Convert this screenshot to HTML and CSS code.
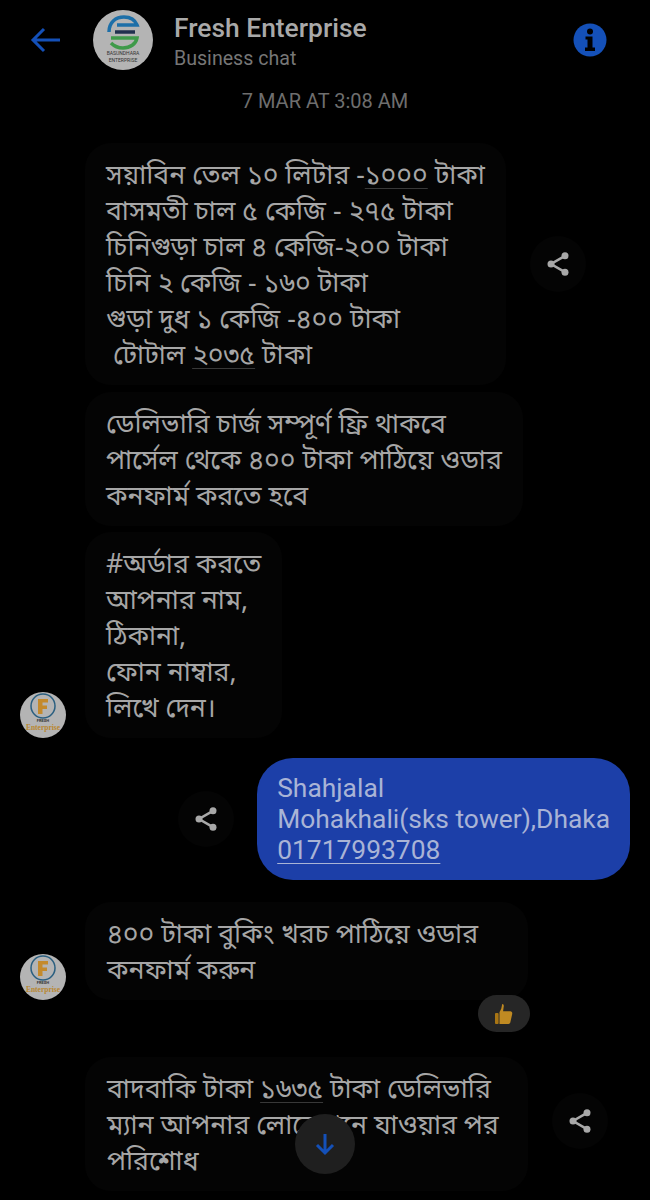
FILE: index.html
```html
<!DOCTYPE html>
<html lang="en">
<head>
    <meta charset="UTF-8">
    <meta name="viewport" content="width=device-width, initial-scale=1.0">
    <title>Fresh Enterprise</title>
    <link rel="stylesheet" href="styles.css">
</head>
<body>

<div class="screen">

    <div class="top-bar">
        <svg class="back-icon" width="34" height="28" viewBox="0 0 34 28">
            <path d="M31 14H4M15 3L4 14l11 11" fill="none" stroke="#1450b8" stroke-width="3"/>
        </svg>
        <svg class="page-logo" width="60" height="60" viewBox="0 0 60 60">
            <circle cx="30" cy="30" r="30" fill="#b4b4b4"/>
            <path d="M16 22C16 12 23 7 31 7c6 0 11 3 13 8H24" fill="none" stroke="#1d6fa8" stroke-width="3.500"/>
            <path d="M22 22h20" stroke="#20304e" stroke-width="3.500"/>
            <path d="M18 28h26c-1 6-7 10-14 10-5 0-9-2-12-5" fill="none" stroke="#3f9a4a" stroke-width="3.500"/>
            <text x="30" y="45" class="logo-text">BASUNDHARA</text>
            <text x="30" y="52" class="logo-text">ENTERPRISE</text>
        </svg>
        <div class="page-info">
            <div class="page-name">Fresh Enterprise</div>
            <div class="page-sub">Business chat</div>
        </div>
        <svg class="info-icon" width="34" height="34" viewBox="0 0 34 34">
            <circle cx="17" cy="17" r="16.5" fill="#1450b8"/>
            <circle cx="17" cy="8.500" r="3" fill="#000"/>
            <path d="M12.500 13.500h7v11h2.500v3.500h-10v-3.500h2.500v-8h-2z" fill="#000"/>
        </svg>
    </div>

    <div class="time-label">7 MAR AT 3:08 AM</div>

    <div class="row row-first">
        <div class="bubble">সয়াবিন তেল ১০ লিটার -<span class="link">১০০০</span> টাকা<br>বাসমতী চাল ৫ কেজি - ২৭৫ টাকা<br>চিনিগুড়া চাল ৪ কেজি-২০০ টাকা<br>চিনি ২ কেজি - ১৬০ টাকা<br>গুড়া দুধ ১ কেজি -৪০০ টাকা<br>&nbsp;টোটাল <span class="link">২০৩৫</span> টাকা</div>
        <div class="share share-after">
            <svg width="28" height="28" viewBox="0 0 24 24"><use href="#share"/></svg>
        </div>
    </div>

    <div class="row row-second">
        <div class="bubble">ডেলিভারি চার্জ সম্পূর্ণ ফ্রি থাকবে<br>পার্সেল থেকে ৪০০ টাকা পাঠিয়ে ওডার<br>কনফার্ম করতে হবে</div>
    </div>

    <div class="row row-third row-end">
        <svg class="avatar" width="46" height="46" viewBox="0 0 46 46"><use href="#f-logo"/></svg>
        <div class="bubble">#অর্ডার করতে<br>আপনার নাম,<br>ঠিকানা,<br>ফোন নাম্বার,<br>লিখে দেন।</div>
    </div>

    <div class="row row-out">
        <div class="share">
            <svg width="28" height="28" viewBox="0 0 24 24"><use href="#share"/></svg>
        </div>
        <div class="bubble bubble-out">Shahjalal<br>Mohakhali(sks tower),Dhaka<br><span class="link">01717993708</span></div>
    </div>

    <div class="row row-end row-react">
        <svg class="avatar" width="46" height="46" viewBox="0 0 46 46"><use href="#f-logo"/></svg>
        <div class="bubble wide-bubble">৪০০ টাকা বুকিং খরচ পাঠিয়ে ওডার<br>কনফার্ম করুন</div>
    </div>
    <div class="reaction">
        <svg width="18" height="22" viewBox="0 0 20 24">
            <path d="M8 1c2 0 2 2 1.500 4L9 9h8c2 0 2.500 2 2 3.500l-2 9c-.3 1-1 1.500-2 1.500H5V10l2-4z" fill="#c08a22"/>
            <rect x="0" y="11" width="4" height="12" rx="1" fill="#a87514"/>
        </svg>
    </div>

    <div class="row row-last">
        <div class="bubble wide-bubble">বাদবাকি টাকা <span class="link">১৬৩৫</span> টাকা ডেলিভারি<br>ম্যান আপনার লোকেশনে যাওয়ার পর<br>পরিশোধ</div>
        <div class="share share-after share-last">
            <svg width="28" height="28" viewBox="0 0 24 24"><use href="#share"/></svg>
        </div>
    </div>

    <div class="scroll-down">
        <svg width="26" height="26" viewBox="0 0 26 26">
            <path d="M13 3v19M5 14l8 8 8-8" fill="none" stroke="#1450b8" stroke-width="3"/>
        </svg>
    </div>

</div>

<svg width="0" height="0" class="defs">
    <defs>
        <g id="share">
            <path d="M18 5L6 12l12 7" fill="none" stroke="#a8a8a8" stroke-width="2.200"/>
            <circle cx="18" cy="5" r="3" fill="#a8a8a8"/>
            <circle cx="6" cy="12" r="3" fill="#a8a8a8"/>
            <circle cx="18" cy="19" r="3" fill="#a8a8a8"/>
        </g>
        <g id="f-logo">
            <circle cx="23" cy="23" r="23" fill="#b4b4b4"/>
            <circle cx="23" cy="14" r="12" fill="none" stroke="#2a5f80" stroke-width="1.500"/>
            <path d="M18 7h10v3.500h-5.500v3h4.500v3.500h-4.500v5h-4.500z" fill="#c48a2c"/>
            <text x="23" y="30" class="f-small">FRESH</text>
            <text x="23" y="38" class="f-name">Enterprise</text>
        </g>
    </defs>
</svg>

</body>
</html>
```

FILE: styles.css
```css
body {
    margin: 0;
    background-color: #000;
    font-family: "Noto Sans Bengali", "Noto Sans", Roboto, sans-serif;
}

.screen {
    position: relative;
    width: 650px;
    height: 1200px;
    overflow: hidden;
    background-color: #000;
}

.defs {
    position: absolute;
}

.top-bar {
    display: flex;
    align-items: center;
    height: 80px;
    padding: 0 43px 0 29px;
}

.back-icon {
    margin-right: 30px;
}

.page-logo {
    margin-right: 21px;
}

.logo-text {
    font-family: Roboto, sans-serif;
    font-size: 5px;
    fill: #333;
    text-anchor: middle;
}

.page-info {
    flex: 1;
    padding-top: 4px;
    font-family: Roboto, sans-serif;
}

.page-name {
    font-size: 26.4px;
    font-weight: 500;
    line-height: 34px;
    color: #a9a9a9;
}

.page-sub {
    font-size: 19.6px;
    line-height: 28px;
    color: #767676;
}

.time-label {
    margin-top: 8px;
    font-family: Roboto, sans-serif;
    font-size: 20px;
    line-height: 26px;
    color: #6e6e6e;
    text-align: center;
}

.row {
    display: flex;
    padding: 0 20px 0 85px;
}

.row-first {
    margin-top: 29px;
    align-items: center;
}

.row-second {
    margin-top: 7px;
}

.row-third {
    margin-top: 6px;
}

.row-end {
    position: relative;
    align-items: flex-end;
}

.row-out {
    margin-top: 20px;
    justify-content: flex-end;
    align-items: center;
}

.row-react {
    margin-top: 22px;
}

.row-last {
    margin-top: 21px;
    align-items: center;
}

.avatar {
    position: absolute;
    left: 20px;
    bottom: 0;
}

.bubble {
    padding: 17px 21px 9px 21px;
    border-radius: 26px;
    background-color: #040404;
    font-size: 26.6px;
    line-height: 36px;
    color: #a6a6a6;
    white-space: nowrap;
}

.wide-bubble {
    box-sizing: border-box;
    width: 443px;
    padding-left: 22px;
}

.bubble-out {
    padding: 15px 20px 14px 20px;
    border-radius: 36px;
    background-color: #1c3fa8;
    font-family: Roboto, sans-serif;
    font-size: 26.4px;
    line-height: 31px;
    color: #a9b4d6;
}

.link {
    text-decoration: underline;
    text-decoration-color: #383838;
    text-decoration-thickness: 1px;
    text-underline-offset: 4px;
}

.bubble-out .link {
    text-decoration-color: #a9b4d6;
}

.share {
    display: flex;
    justify-content: center;
    align-items: center;
    width: 56px;
    height: 56px;
    margin-right: 23px;
    border-radius: 50%;
    background-color: #040404;
}

.share-after {
    margin: 0 0 0 24px;
}

.share-last {
    margin-bottom: 6px;
}

.reaction {
    position: relative;
    display: flex;
    justify-content: center;
    align-items: center;
    width: 52px;
    height: 37px;
    margin: -5px 0 4px 478px;
    border-radius: 19px;
    background-color: #262626;
}

.row-last {
    margin-top: 25px;
}

.scroll-down {
    position: absolute;
    left: 295px;
    top: 1114px;
    display: flex;
    justify-content: center;
    align-items: center;
    width: 60px;
    height: 60px;
    border-radius: 50%;
    background-color: #1f1f1f;
}

.f-small {
    font-family: Roboto, sans-serif;
    font-size: 4px;
    font-weight: 700;
    fill: #333;
    text-anchor: middle;
}

.f-name {
    font-family: "Liberation Serif", serif;
    font-size: 7.500px;
    font-weight: 700;
    fill: #b98730;
    text-anchor: middle;
}
```
